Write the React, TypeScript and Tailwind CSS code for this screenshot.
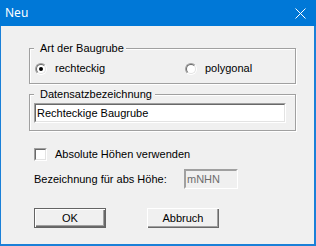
import React from "react";

const font = { fontFamily: '"Liberation Sans", Arial, sans-serif' };

function Radio({ checked }: { checked?: boolean }) {
  return (
    <div className="w-[12px] h-[12px] rounded-full border border-t-[#a0a0a0] border-l-[#a0a0a0] border-b-white border-r-white shrink-0">
      <div className="w-full h-full rounded-full border border-t-[#696969] border-l-[#696969] border-b-[#e3e3e3] border-r-[#e3e3e3] bg-white flex items-center justify-center">
        {checked && <div className="w-[4px] h-[4px] rounded-full bg-black" />}
      </div>
    </div>
  );
}

export default function App() {
  return (
    <div className="w-[316px] h-[246px] bg-[#1a80d8] flex flex-col text-black text-[11px] leading-[13px]" style={font}>
      <div className="h-[26px] bg-[#0078d7] flex items-center justify-between shrink-0">
        <span className="pl-[5px] text-white text-[12px] leading-[16px]" style={{ fontFamily: '"Noto Sans", "Open Sans", sans-serif' }}>
          Neu
        </span>
        <svg width="11" height="11" viewBox="0 0 11 11" className="mr-[10px]">
          <path d="M0.5 0.5 L10.5 10.5 M10.5 0.5 L0.5 10.5" stroke="white" strokeWidth="1" />
        </svg>
      </div>
      <div className="flex-1 bg-[#f0f0f0] ml-[1px] mr-[2px] mb-[2px] flex flex-col pl-[28px] pt-[22px]">
        <div className="relative w-[267px] h-[36px] border border-[#a0a0a0] shadow-[inset_1px_1px_0_#fff,1px_1px_0_#fff] pt-[13px] pl-[5px] flex">
          <span className="absolute -top-[7px] left-[4px] bg-[#f0f0f0] pl-[6px] pr-[2px]">Art der Baugrube</span>
          <div className="w-[150px] flex items-center gap-[8px] h-[13px]">
            <Radio checked />
            <span>rechteckig</span>
          </div>
          <div className="flex items-center gap-[8px] h-[13px]">
            <Radio />
            <span>polygonal</span>
          </div>
        </div>
        <div className="relative mt-[10px] w-[267px] h-[37px] border border-[#a0a0a0] shadow-[inset_1px_1px_0_#fff,1px_1px_0_#fff] pt-[8px] pl-[4px]">
          <span className="absolute -top-[7px] left-[4px] bg-[#f0f0f0] pl-[6px] pr-[3px]">Datensatzbezeichnung</span>
          <div className="w-[252px] h-[20px] border border-t-[#a0a0a0] border-l-[#a0a0a0] border-b-white border-r-white">
            <div className="w-full h-full border border-t-[#696969] border-l-[#696969] border-b-[#e3e3e3] border-r-[#e3e3e3] bg-white flex items-center pl-[1px]">
              Rechteckige Baugrube
            </div>
          </div>
        </div>
        <div className="mt-[17px] ml-[5px] flex items-center gap-[8px] h-[13px]">
          <div className="w-[13px] h-[13px] border border-t-[#a0a0a0] border-l-[#a0a0a0] border-b-white border-r-white">
            <div className="w-full h-full border border-t-[#696969] border-l-[#696969] border-b-[#e3e3e3] border-r-[#e3e3e3] bg-white" />
          </div>
          <span>Absolute Höhen verwenden</span>
        </div>
        <div className="mt-[8px] ml-[5px] flex items-center h-[20px]">
          <span className="w-[150px]">Bezeichnung für abs Höhe:</span>
          <div className="w-[54px] h-[20px] border border-t-[#a0a0a0] border-l-[#a0a0a0] border-b-white border-r-white">
            <div className="w-full h-full border border-t-[#a0a0a0] border-l-[#a0a0a0] border-b-[#f0f0f0] border-r-[#f0f0f0] bg-[#f0f0f0] flex items-center pl-[1px] text-[#6d6d6d]">
              mNHN
            </div>
          </div>
        </div>
        <div className="mt-[19px] ml-[5px] flex gap-[41px]">
          <div className="w-[72px] h-[20px] border border-[#646464] shadow-[inset_1px_1px_0_#fff,inset_-1px_-1px_0_#696969,inset_-2px_-2px_0_#a0a0a0] flex items-center justify-center">
            OK
          </div>
          <div className="w-[72px] h-[20px] shadow-[inset_1px_1px_0_#fff,inset_-1px_-1px_0_#696969,inset_-2px_-2px_0_#a0a0a0] flex items-center justify-center">
            Abbruch
          </div>
        </div>
      </div>
    </div>
  );
}
